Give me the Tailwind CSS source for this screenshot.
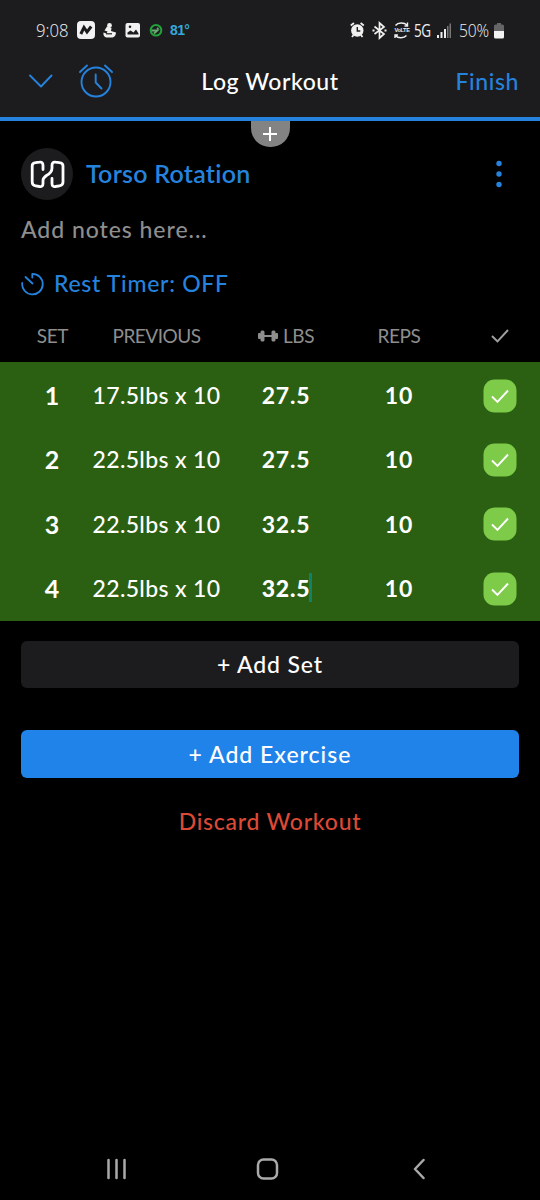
<!DOCTYPE html>
<html lang="en">
<head>
<meta charset="utf-8">
<title>Log Workout</title>
<script src="https://cdn.jsdelivr.net/npm/@tailwindcss/browser@4"></script>
</head>
<body class="bg-black">
<main class="flex h-[1200px] w-[540px] flex-col overflow-hidden bg-black font-['Lato','Open_Sans',sans-serif] font-medium text-white [font-variant-ligatures:none]">
  <header class="h-[121px] shrink-0 border-b-4 border-[#2683dd] bg-[#1c1c1e]">
    <div class="flex h-[60px] items-center pl-[36px] pr-[35px] font-['Open_Sans',sans-serif] font-light text-[#f0f0f0]">
      <span class="w-[41px] origin-left scale-x-[0.880] text-[19px]">9:08</span>
      <svg class="h-[20px] w-[86px]" viewBox="0 0 86 20" fill="none">
        <rect x="0" y="1" width="18" height="18" rx="4" fill="#f2f2f4"/>
        <path d="M3.800 14L7 7.500L10 12L14.200 6.500" stroke="#1c1c1e" stroke-width="3"/>
        <g fill="#f0f0f0"><circle cx="32.500" cy="5.500" r="2.400"/><path d="M30 6.500l4.500 1.500-.5 3 5 1.500c0 3-2 5-4.500 5h-4c-2.800 0-4.500-2-4-5l3 1 1-2-3-1z"/></g>
        <path d="M29 13.800h6" stroke="#1c1c1e" stroke-width="1.200"/>
        <rect x="48.500" y="3" width="14.500" height="14.500" rx="2" fill="#f0f0f0"/>
        <path d="M50.500 14.500v-2l3-2 3 2 2.500-3 2.500 4v1z" fill="#1c1c1e"/><circle cx="53" cy="6.800" r="1.300" fill="#1c1c1e"/>
        <circle cx="79" cy="10.300" r="5.300" stroke="#23a13a" stroke-width="2"/>
        <path d="M74.500 10.500h6l-3.500 3M80 8l1.500 1" stroke="#6aa874" stroke-width="1.800"/>
      </svg>
      <span class="ml-[7px] font-['Liberation_Sans',sans-serif] text-[14px] font-bold tracking-[-0.600px] text-[#36a8dc]">81°</span>
      <svg class="ml-auto h-[20px] w-[60px] shrink-0" viewBox="0 0 60 20" fill="none">
        <circle cx="7.300" cy="10.500" r="6.200" fill="#f0f0f0"/>
        <path d="M.8 5.500L4 3M13.800 5.500L10.600 3M3.500 15l-1.500 2M11 15l1.500 2" stroke="#f0f0f0" stroke-width="1.800"/>
        <path d="M7.300 7v4h3" stroke="#1c1c1e" stroke-width="1.400"/>
        <path d="M24.500 6.500l9.500 7.500-4.500 4V3l4.500 4-9.500 7" stroke="#f0f0f0" stroke-width="1.700"/>
        <path d="M22.500 10.500h2M34.500 10.500h2" stroke="#f0f0f0" stroke-width="2"/>
        <path d="M45.500 5.500C48 2.200 54 2.200 57 5M57.500 2.500v3.500h-3M56.500 15.500C54 18.500 48 18.500 45.500 15.800M45 18v-3h3" stroke="#f0f0f0" stroke-width="1.400"/>
      </svg>
      <span class="-ml-[16px] w-[16px] text-center font-['Liberation_Sans',sans-serif] text-[5.500px] font-bold leading-[8px] tracking-[-0.300px]">VoLTE</span>
      <span class="ml-[4px] w-[17px] origin-left scale-x-[0.750] text-[18px] font-normal tracking-[-0.500px]">5G</span>
      <svg class="ml-[5px] h-[16px] w-[15px] shrink-0" viewBox="0 0 15 16"><path d="M1 13h2v3H1zM4.500 10h2v6h-2zM8 7h2v9H8z" fill="#eee"/><path d="M11 4h1.500v12H11zM13.500 1.500H15V16h-1.500z" fill="#777"/></svg>
      <span class="ml-[8px] w-[34px] origin-left scale-x-[0.820] text-[19px] tracking-[-0.200px]">50%</span>
      <svg class="h-[17px] w-[12px] shrink-0" viewBox="0 0 12 17"><path d="M4 1h4v1.500h1.500q1.500 0 1.500 1.500v5H1V4q0-1.500 1.500-1.500H4z" fill="#656567"/><path d="M1 9h10v6q0 1.500-1.500 1.500h-7Q1 16.500 1 15z" fill="#f2f2f2"/></svg>
    </div>
    <div class="grid h-[42px] grid-cols-[180px_1fr_180px] items-center">
      <div class="flex items-center pl-[28px]">
        <svg class="h-[14px] w-[25px]" viewBox="0 0 25 14" fill="none" stroke="#2683dd" stroke-width="1.900" stroke-linecap="round" stroke-linejoin="round"><path d="M2 1.500l11 11L23.500 1.500"/></svg>
        <svg class="ml-[25px] h-[36px] w-[36px]" viewBox="0 0 36 36" fill="none" stroke="#2683dd" stroke-width="1.900" stroke-linecap="round" stroke-linejoin="round"><circle cx="18" cy="19" r="14.500"/><path d="M17.700 11.500v8l5.800 6M2 9L9 2.500M27 2.500L34 9"/></svg>
      </div>
      <h1 class="text-center text-[23px] leading-none tracking-[0.550px]">Log Workout</h1>
      <div class="pr-[21px] text-right text-[23px] leading-none tracking-[0.600px] text-[#2683dd]">Finish</div>
    </div>
  </header>

  <div class="mx-auto flex h-[26px] w-[39px] shrink-0 items-center justify-center rounded-b-[19px] bg-[#838383]">
    <svg class="h-[14px] w-[14px]" viewBox="0 0 14 14" stroke="#fff" stroke-width="2"><path d="M7 0v14M0 7h14"/></svg>
  </div>

  <section class="flex h-[53px] shrink-0 items-center pl-[21px] pr-[38px]">
    <svg class="h-[52px] w-[52px]" viewBox="0 0 52 52" fill="none"><circle cx="26" cy="26" r="26" fill="#1c1c1e"/>
      <path d="M22 21.500V17.500Q22 13.500 18.500 14.200L14.500 14.700Q11.200 15 11.200 18V34Q11.200 37.300 14.500 37.800L18.500 38.500Q22 39 22 35.500V32.500Q22 30 25.500 27.500Q31 24.500 31 20V17.500Q31 13.500 34.500 14.200L38.500 14.700Q42 15 42 18V34Q42 37.300 38.500 37.800L34.500 38.500Q31 39 31 35.500V30.500" stroke="#fff" stroke-width="2.800" stroke-linecap="round"/></svg>
    <h2 class="ml-[13px] text-[25px] font-semibold leading-none tracking-[0.250px] text-[#2683dd]">Torso Rotation</h2>
    <svg class="ml-auto h-[28px] w-[6px]" viewBox="0 0 6 28" fill="#2683dd"><circle cx="3" cy="3.500" r="2.700"/><circle cx="3" cy="14" r="2.700"/><circle cx="3" cy="24.500" r="2.700"/></svg>
  </section>
  <p class="flex h-[58px] shrink-0 items-center pl-[21px] text-[23px] leading-none tracking-[0.950px] text-[#8e8e8e]">Add notes here...</p>
  <div class="flex h-[51px] shrink-0 items-center pl-[21px] text-[#2683dd]">
    <svg class="h-[24px] w-[23px]" viewBox="0 0 23 24" fill="none" stroke="currentColor" stroke-width="1.800" stroke-linecap="round" stroke-linejoin="round"><path d="M11.300 5.500V1.800A10.300 10.300 0 1 1 1.200 11M4.500 5l7 6.500"/></svg>
    <span class="ml-[10px] text-[23px] leading-none tracking-[0.700px]">Rest Timer: OFF</span>
  </div>

  <div class="grid h-[53px] shrink-0 grid-cols-[104px_105px_154px_72px_1fr] items-center text-[19px] font-normal leading-none text-[#8e8e8e]">
    <span class="pl-px text-center tracking-[-0.400px]">SET</span>
    <span class="text-center tracking-[-0.500px]">PREVIOUS</span>
    <span class="flex items-center justify-center">
      <svg class="mr-[5px] h-[12px] w-[20px]" viewBox="0 0 20 12" fill="#8e8e8e"><rect x="0" y="3" width="3" height="6" rx="1"/><rect x="2.500" y=".5" width="4" height="11" rx="1.500"/><rect x="6" y="5" width="8" height="2"/><rect x="13.500" y=".5" width="4" height="11" rx="1.500"/><rect x="17" y="3" width="3" height="6" rx="1"/></svg>
      <span class="tracking-[-0.400px]">LBS</span></span>
    <span class="text-center tracking-[-0.400px]">REPS</span>
    <svg class="ml-[56px] h-[14px] w-[18px]" viewBox="0 0 18 14" fill="none" stroke="#a0a0a0" stroke-width="1.900"><path d="M1 7l5.500 5.500L17 1"/></svg>
  </div>

  <div class="h-[259px] shrink-0 bg-[#2b6012] pt-[1.500px] text-[23px] leading-none [&_svg]:ml-[48px] [&_svg]:size-[34px] [&>div]:grid [&>div]:h-[64.300px] [&>div]:grid-cols-[104px_105px_154px_72px_1fr] [&>div]:items-center [&_span]:text-center">
    <div><span class="text-[25px] font-bold">1</span><span class="-mx-[20px] whitespace-nowrap tracking-[0.350px]">17.5lbs x 10</span><span class="font-bold tracking-[0.800px]">27.5</span><span class="font-bold tracking-[0.800px]">10</span><svg viewBox="0 0 34 34" fill="none"><rect x=".5" y=".5" width="33" height="33" rx="11" fill="#7ecb49"/><path d="M9 17.500l5.500 5.500L25 11.500" stroke="#fff" stroke-width="1.900"/></svg></div>
    <div><span class="text-[25px] font-bold">2</span><span class="-mx-[20px] whitespace-nowrap tracking-[0.350px]">22.5lbs x 10</span><span class="font-bold tracking-[0.800px]">27.5</span><span class="font-bold tracking-[0.800px]">10</span><svg viewBox="0 0 34 34" fill="none"><rect x=".5" y=".5" width="33" height="33" rx="11" fill="#7ecb49"/><path d="M9 17.500l5.500 5.500L25 11.500" stroke="#fff" stroke-width="1.900"/></svg></div>
    <div><span class="text-[25px] font-bold">3</span><span class="-mx-[20px] whitespace-nowrap tracking-[0.350px]">22.5lbs x 10</span><span class="font-bold tracking-[0.800px]">32.5</span><span class="font-bold tracking-[0.800px]">10</span><svg viewBox="0 0 34 34" fill="none"><rect x=".5" y=".5" width="33" height="33" rx="11" fill="#7ecb49"/><path d="M9 17.500l5.500 5.500L25 11.500" stroke="#fff" stroke-width="1.900"/></svg></div>
    <div><span class="text-[25px] font-bold">4</span><span class="-mx-[20px] whitespace-nowrap tracking-[0.350px]">22.5lbs x 10</span><span class="font-bold tracking-[0.800px]"><b class="relative">32.5<i class="absolute -right-[2px] -top-[1px] h-[29px] w-[3px] bg-[#10826a]"></i></b></span><span class="font-bold tracking-[0.800px]">10</span><svg viewBox="0 0 34 34" fill="none"><rect x=".5" y=".5" width="33" height="33" rx="11" fill="#7ecb49"/><path d="M9 17.500l5.500 5.500L25 11.500" stroke="#fff" stroke-width="1.900"/></svg></div>
  </div>

  <div class="flex flex-col px-[21px] pt-[20px] text-[23px] leading-none">
    <button class="h-[47px] rounded-[6px] bg-[#1c1c1e] tracking-[0.850px]">+ Add Set</button>
    <button class="mt-[42px] h-[48px] rounded-[6px] bg-[#1f83ea] tracking-[1px]">+ Add Exercise</button>
    <button class="mt-[19px] h-[48px] tracking-[0.750px] text-[#dc4a36]">Discard Workout</button>
  </div>

  <nav class="mt-auto flex h-[62px] shrink-0 items-center pl-[106px]">
    <svg class="h-[22px] w-[322px]" viewBox="0 0 322 22" fill="none" stroke="#aaa" stroke-width="2.500" stroke-linecap="round" stroke-linejoin="round"><path d="M2.500 2v18M10.500 2v18M18.500 2v18M317.500 2L309 11l8.500 9"/><rect x="152" y="1.500" width="19" height="19" rx="5.500"/></svg>
  </nav>
</main>
</body>
</html>
